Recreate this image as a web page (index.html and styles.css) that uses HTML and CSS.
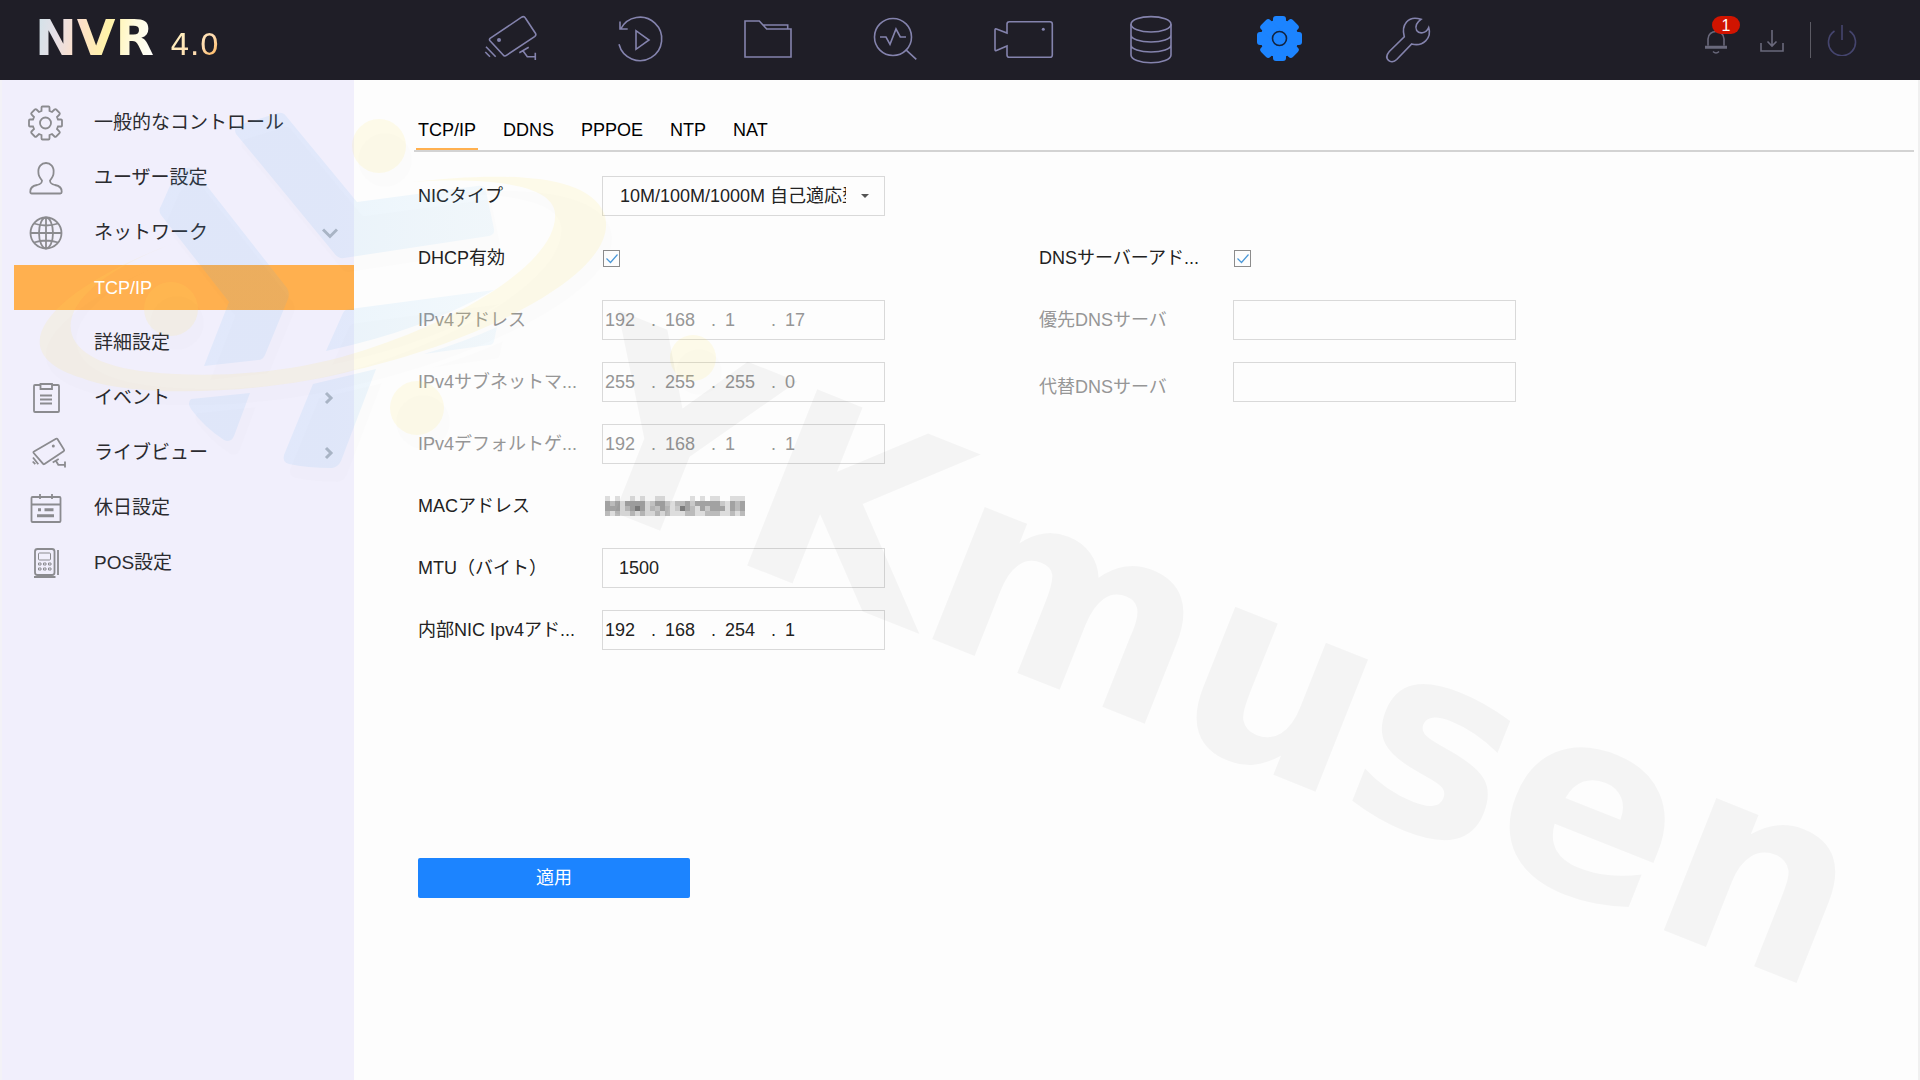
FILE: index.html
```html
<!DOCTYPE html>
<html lang="ja">
<head>
<meta charset="utf-8">
<title>NVR 4.0</title>
<link rel="stylesheet" href="styles.css">
</head>
<body>
<header class="topbar">
  <div class="brand"><span class="brand-name">NVR</span> <span class="brand-version">4.0</span></div>
  <nav class="modules" aria-label="メインメニュー">
    <button class="module" type="button" aria-label="ライブビュー"><svg class="module-icon" viewBox="0 0 64 64"><path d="M11.4 30.2 42.6 9.2Q45 7.8 46.5 10.2L56.4 25.2Q57.6 27.2 55.6 28.6L27.4 47.4Q25.6 48.8 24.2 47L11 32.8Q9.8 31.4 11.4 30.2ZM7 38.7l9.7 10M6.3 44l4.7 4.7M40.3 44.7l9.4-5.4M44.3 43.3l4 5.4h8M56.3 44.7V52"/><circle class="dot" cx="20" cy="32" r="2"/></svg></button>
    <button class="module" type="button" aria-label="再生"><svg class="module-icon" viewBox="0 0 64 64"><path d="M13.7 21A21.7 21.7 0 1 1 12 36.3M13 13.5V21h7.7M29 22.7v18.6L42 32Z"/></svg></button>
    <button class="module" type="button" aria-label="ファイル管理"><svg class="module-icon" viewBox="0 0 64 64"><path d="M10 13h14.3l7.4 8H56v28H10ZM28.3 17h24.4v4"/></svg></button>
    <button class="module" type="button" aria-label="スマート分析"><svg class="module-icon" viewBox="0 0 64 64"><circle cx="30" cy="29" r="18.5"/><path d="M42.7 41.7l10.6 9.6M17 29h6l4 7.3L33 21l4.3 8H43"/></svg></button>
    <button class="module" type="button" aria-label="カメラ管理"><svg class="module-icon" viewBox="0 0 64 64"><path d="M16 16q0-2.300 2.300-2.300h40.700q2.300 0 2.300 2.300v31q0 2.300-2.300 2.300H18.300q-2.300 0-2.300-2.300v-9L5.500 42.500Q4 43 4 41.500V22q0-1.500 1.500-1L16 25Z"/><circle class="dot" cx="52.300" cy="21.300" r="1.500"/></svg></button>
    <button class="module" type="button" aria-label="ストレージ"><svg class="module-icon" viewBox="0 0 64 64"><ellipse cx="32" cy="16.300" rx="20" ry="7.700"/><path d="M12 16.300V47c0 4.300 9 7.700 20 7.700s20-3.400 20-7.700V16.300M12 27c0 4 9 7 20 7s20-3 20-7M12 37c0 4 9 7 20 7s20-3 20-7"/></svg></button>
    <button class="module module--active" type="button" aria-label="設定" aria-current="page"><svg class="module-icon" viewBox="0 0 64 64"><g class="gear-body"><circle cx="32.500" cy="30.500" r="19"/><rect id="tooth" x="26" y="8" width="13" height="45" rx="3"/><use href="#tooth" transform="rotate(45 32.500 30.500)"/><use href="#tooth" transform="rotate(90 32.500 30.500)"/><use href="#tooth" transform="rotate(135 32.500 30.500)"/></g><circle class="gear-ring" cx="32.500" cy="30.500" r="7"/></svg></button>
    <button class="module" type="button" aria-label="メンテナンス"><svg class="module-icon" viewBox="0 0 64 64"><path d="M46 11.300C33 7 26 17 29.300 28.700L14.300 43.500C8 51 16 57 21.700 51.500L36.700 36C48 39 57 30 53.700 19.500C51 26 44 26 41.700 22.500C39.500 18.500 42 14 46 11.300Z"/></svg></button>
  </nav>
  <div class="status">
    <button class="status-button" type="button" aria-label="通知"><svg class="status-icon" viewBox="0 0 32 32"><path d="M8 21.500V15c0-10 16-10 16 0v6.500M5 22.500h22M5 24h22M13 27.500q3 3 6 0"/></svg><span class="badge">1</span></button>
    <button class="status-button status-button--download" type="button" aria-label="ダウンロード"><svg class="status-icon" viewBox="0 0 32 32"><path d="M5 19v8h22v-8M16 6v15M11.500 17.500 16 22l4.500-4.500"/></svg></button>
    <button class="status-button status-button--power" type="button" aria-label="電源"><svg class="status-icon" viewBox="0 0 32 32"><path d="M16 1v15M8.500 7A13.500 13.500 0 1 0 23.500 7"/></svg></button>
  </div>
</header>
<div class="workspace">
  <nav class="sidebar" aria-label="設定メニュー">
    <a class="side-item" href="#general"><svg class="side-icon" viewBox="0 0 40 40"><path d="M15.500 8V4.500q0-1 1-1h6q1 0 1 1V8l2.500 1 2.500-2.500q1-.7 1.700 0l3.300 3.300q.7 1 0 1.700L31 14l1 2.500h3q1 0 1 1v5q0 1-1 1h-3L31 26l2.500 2.500q.7 1 0 1.700l-3.300 3.300q-1 .7-1.700 0L26 31l-2.500 1v3.500q0 1-1 1h-6q-1 0-1-1V32L13 31l-2.500 2.500q-1 .7-1.700 0l-3.300-3.300q-.7-1 0-1.700L8 26l-1-2.500H4q-1 0-1-1v-5q0-1 1-1h3L8 14l-2.500-2.500q-.7-1 0-1.700l3.300-3.300q1-.7 1.700 0L13 9Z"/><circle cx="19.500" cy="20" r="5.500"/></svg><span>一般的なコントロール</span></a>
    <a class="side-item" href="#user"><svg class="side-icon" viewBox="0 0 40 40"><path d="M16 22.500C14 20 12.500 18 12.500 15.500 10.500 1.500 29.500 1.500 27.500 15.500c0 2.500-1.500 4.500-3.500 7 0 2.500 1 3.500 5 4.500 5 1 7 3.500 6.700 7q0 1.500-1.500 1.500H5.800q-1.500 0-1.500-1.500C4 30.500 6 28 11 27c4-1 5-2 5-4.500Z"/></svg><span>ユーザー設定</span></a>
    <a class="side-item" href="#network" aria-expanded="true"><svg class="side-icon" viewBox="0 0 40 40"><circle cx="20" cy="20" r="15.500"/><ellipse cx="20" cy="20" rx="7" ry="15.500"/><path d="M20 4.500v31M4.500 20h31M8 10.500q12 4 24 0M8 29.500q12-4 24 0"/></svg><span>ネットワーク</span><svg class="chevron" viewBox="0 0 16 16"><path d="M1 4.500l7 7 7-7"/></svg></a>
    <a class="side-item side-item--sub side-item--current" href="#tcpip" aria-current="page"><span>TCP/IP</span></a>
    <a class="side-item side-item--sub" href="#advanced"><span>詳細設定</span></a>
    <a class="side-item" href="#event"><svg class="side-icon" viewBox="0 0 40 40"><path d="M14 7H9q-1 0-1 1v25q0 1 1 1h23q1 0 1-1V8q0-1-1-1h-6M14.500 6h11.500v5H14.500ZM14 17.500h12M14 21.500h12M14 25.500h12"/></svg><span>イベント</span><svg class="chevron" viewBox="0 0 16 16"><path d="M4 3l5 5-5 5"/></svg></a>
    <a class="side-item" href="#live"><svg class="side-icon" viewBox="0 0 40 40"><path d="M8 18.500 30 5.800q1-.6 1.600.4L38 16.600q.5 1-.4 1.600L18.500 31q-1 .6-1.600-.4L7.700 20q-.7-1 .3-1.500ZM6.700 28.500l2.600 2.700M7 24.500l5.300 6.700M26.700 29.500l6-3.500M30 28l2.300 3.800h7M39 28.500v6"/><circle class="dot" cx="27.300" cy="13" r="1.500"/></svg><span>ライブビュー</span><svg class="chevron" viewBox="0 0 16 16"><path d="M4 3l5 5-5 5"/></svg></a>
    <a class="side-item" href="#holiday"><svg class="side-icon" viewBox="0 0 40 40"><path d="M6.500 9h27q1 0 1 1v23q0 1-1 1h-27q-1 0-1-1V10q0-1 1-1ZM6 16.500h28M14 6v5M26 6v5"/><path class="thick" d="M12 21.800h3M18.500 21.800h9M11 27.800h17"/></svg><span>休日設定</span></a>
    <a class="side-item" href="#pos"><svg class="side-icon" viewBox="0 0 40 40"><rect x="9" y="6" width="19.500" height="26" rx="2.500"/><path d="M8 34h21.500M32 7v25"/><g class="fine"><rect x="12.500" y="10" width="12" height="7" rx="1"/><path d="M12.500 20h2.500v2h-2.500ZM17.500 20H20v2h-2.500ZM22.500 20H25v2h-2.500ZM12.500 25h2.500v2h-2.500ZM17.500 25H20v2h-2.500ZM22.500 25H25v2h-2.500Z"/></g></svg><span>POS設定</span></a>
  </nav>
  <main class="content">
    <div class="tabs" role="tablist">
      <button class="tab tab--active" type="button" role="tab" aria-selected="true">TCP/IP</button>
      <button class="tab" type="button" role="tab" aria-selected="false">DDNS</button>
      <button class="tab" type="button" role="tab" aria-selected="false">PPPOE</button>
      <button class="tab" type="button" role="tab" aria-selected="false">NTP</button>
      <button class="tab" type="button" role="tab" aria-selected="false">NAT</button>
    </div>
    <form class="settings">
      <div class="columns">
        <div class="column">
          <div class="field">
            <label class="label" for="nic">NICタイプ</label>
            <div class="select-box">
              <select class="box select" id="nic"><option>10M/100M/1000M 自己適応型</option></select>
              <svg class="caret" viewBox="0 0 8 4"><path d="M0 0h8L4 4Z"/></svg>
            </div>
          </div>
          <div class="field">
            <label class="label" for="dhcp">DHCP有効</label>
            <input class="check" id="dhcp" type="checkbox" checked>
          </div>
          <div class="field field--disabled">
            <label class="label" for="ip1">IPv4アドレス</label>
            <div class="box address">
              <input class="octet" id="ip1" value="192" disabled><span class="point">.</span><input class="octet" value="168" aria-label="IPv4アドレス 2" disabled><span class="point">.</span><input class="octet" value="1" aria-label="IPv4アドレス 3" disabled><span class="point">.</span><input class="octet" value="17" aria-label="IPv4アドレス 4" disabled>
            </div>
          </div>
          <div class="field field--disabled">
            <label class="label" for="mask1">IPv4サブネットマ...</label>
            <div class="box address">
              <input class="octet" id="mask1" value="255" disabled><span class="point">.</span><input class="octet" value="255" aria-label="サブネットマスク 2" disabled><span class="point">.</span><input class="octet" value="255" aria-label="サブネットマスク 3" disabled><span class="point">.</span><input class="octet" value="0" aria-label="サブネットマスク 4" disabled>
            </div>
          </div>
          <div class="field field--disabled">
            <label class="label" for="gw1">IPv4デフォルトゲ...</label>
            <div class="box address">
              <input class="octet" id="gw1" value="192" disabled><span class="point">.</span><input class="octet" value="168" aria-label="ゲートウェイ 2" disabled><span class="point">.</span><input class="octet" value="1" aria-label="ゲートウェイ 3" disabled><span class="point">.</span><input class="octet" value="1" aria-label="ゲートウェイ 4" disabled>
            </div>
          </div>
          <div class="field">
            <span class="label">MACアドレス</span>
            <svg class="mac-mask" viewBox="0 0 28 4" shape-rendering="crispEdges" role="img" aria-label="MACアドレス（非表示）">
              <path fill="#c8c8c8" d="M0 1h28v2h-28z"/>
              <path fill="#ddd" d="M0 0h1v1h-1zM2 0h1v1h-1zM5 0h1v1h-1zM7 0h1v1h-1zM10 0h2v1h-2zM17 0h1v1h-1zM19 0h1v1h-1zM21 0h2v1h-2zM25 0h3v1h-3zM3 1h1v2h-1zM8 1h1v2h-1zM13 1h1v2h-1zM18 2h1v1h-1zM24 1h1v2h-1zM0 3h28v1h-28z"/>
              <path fill="#bbb" d="M1 1h1v1h-1zM4 2h1v1h-1zM9 2h1v1h-1zM12 2h1v1h-1zM14 1h2v1h-2zM17 2h1v1h-1zM26 1h1v2h-1zM0 3h1v1h-1zM2 3h1v1h-1zM5 3h1v1h-1zM7 3h1v1h-1zM10 3h1v1h-1zM12 3h1v1h-1zM16 3h2v1h-2zM20 3h3v1h-3zM25 3h1v1h-1zM27 3h1v1h-1z"/>
              <path fill="#a2a2a2" d="M0 1h1v1h-1zM2 1h1v1h-1zM4 1h3v1h-3zM7 1h1v2h-1zM0 2h3v1h-3zM5 2h1v1h-1zM10 1h2v1h-2zM11 2h1v1h-1zM16 1h1v1h-1zM18 1h2v1h-2zM16 2h1v1h-1zM19 2h1v1h-1zM20 1h3v1h-3zM21 2h3v1h-3zM25 1h1v2h-1zM27 1h1v2h-1z"/>
              <path fill="#7c7c7c" d="M6 2h1v1h-1zM15 2h1v1h-1z"/>
            </svg>
          </div>
          <div class="field">
            <label class="label" for="mtu">MTU（バイト）</label>
            <input class="box text-input" id="mtu" value="1500">
          </div>
          <div class="field">
            <label class="label" for="nic1">内部NIC Ipv4アド...</label>
            <div class="box address">
              <input class="octet" id="nic1" value="192"><span class="point">.</span><input class="octet" value="168" aria-label="内部NIC 2"><span class="point">.</span><input class="octet" value="254" aria-label="内部NIC 3"><span class="point">.</span><input class="octet" value="1" aria-label="内部NIC 4">
            </div>
          </div>
        </div>
        <div class="column column--dns">
          <div class="field">
            <label class="label" for="dns">DNSサーバーアド...</label>
            <input class="check" id="dns" type="checkbox" checked>
          </div>
          <div class="field field--disabled">
            <label class="label" for="dns1">優先DNSサーバ</label>
            <input class="box text-input" id="dns1" disabled>
          </div>
          <div class="field field--disabled field--low">
            <label class="label" for="dns2">代替DNSサーバ</label>
            <input class="box text-input" id="dns2" disabled>
          </div>
        </div>
      </div>
      <button class="apply" type="button">適用</button>
    </form>
  </main>
</div>
<svg class="watermark" viewBox="0 0 1920 1080" preserveAspectRatio="xMinYMin meet" aria-hidden="true">
  <defs>
    <linearGradient id="sky" gradientUnits="userSpaceOnUse" x1="160" y1="0" x2="500" y2="0">
      <stop offset="0" stop-color="#50aaf0" stop-opacity=".1"/>
      <stop offset=".5" stop-color="#50aaf0" stop-opacity=".1"/>
      <stop offset="1" stop-color="#50b4f0" stop-opacity=".06"/>
    </linearGradient>
    <g id="blades">
      <path d="M236 134q-3-6 3-9l39-12q5-1 8 3l71 86 120-16q8-1 9 5l8 38q1 6-5 7l-145 22q-6 1-10-5Z"/>
      <path d="M161 215q-3-5 0-9l12-27q3-6 8-8l6-3q5-1 9 4l91 116q3 5 1 11l-23 56q-2 5-7 5l-54 6 25-64Z"/>
      <path d="M191 399l59-6-16 43q-3 7-10 4-20-13-33-31-4-6 0-10Z"/>
      <path d="M313 384l63-15-35 92q-3 6-9 7-25 0-43-4-7-2-5-9Z"/>
      <path d="M326 351l17-38q2-4 7-4l144-19q-70 40-168 61Z"/>
      <path d="M424 354q40-12 73-27l-3 14q-1 4-5 4Z"/>
    </g>
    <g id="orbit">
      <path d="M177 242C60 285-10 350 82 378c55 22 190 15 273-8 130-30 270-100 249-157-18-42-110-40-192-31 80-5 140 3 143 31 4 50-100 110-200 140-70 22-150 25-205 19-110-10-110-80 27-130Z"/>
      <circle cx="379" cy="146" r="27"/><circle cx="171" cy="309" r="27"/><circle cx="417" cy="408" r="27"/><circle cx="693" cy="358" r="23"/>
    </g>
  </defs>
  <g class="mark-shade" transform="translate(6 14)"><use href="#blades"/><use href="#orbit"/></g>
  <use class="mark-blades" href="#blades"/>
  <use class="mark-orbit" href="#orbit"/>
  <text class="mark-text" transform="translate(550 487) rotate(21.700)" x="0" y="0">YKmusen</text>
</svg>
</body>
</html>
```
FILE: styles.css
```css
* { box-sizing: border-box; }

body {
  margin: 0;
  min-height: 100vh;
  display: flex;
  flex-direction: column;
  position: relative;
  background: #fdfdfd;
  color: #222;
  font: 18px/22px "Liberation Sans", "Noto Sans CJK JP", sans-serif;
}

button, input, select { font: inherit; color: inherit; }
button { padding: 0; border: 0; background: none; cursor: pointer; }

/* Top bar */
.topbar {
  display: flex;
  height: 80px;
  padding-right: 60px;
  background: #1f1e27;
}
.brand {
  display: flex;
  align-items: baseline;
  gap: 16px;
  width: 447px;
  padding: 8px 0 0 35px;
  color: #ffe9b0;
}
.brand-name {
  font: bold 50px/60px "DejaVu Sans", sans-serif;
  background: linear-gradient(100deg, #cfe3ea 0%, #e6dfe6 20%, #fde0c8 38%, #fff3a8 60%, #fffbe0 80%, #fff 100%);
  -webkit-background-clip: text;
  background-clip: text;
  color: transparent;
}
.brand-version {
  font: 31px/60px "DejaVu Sans", sans-serif;
  background: linear-gradient(135deg, #fff2c0 20%, #ffdcb0 60%, #ffb04c 85%);
  -webkit-background-clip: text;
  background-clip: text;
  color: transparent;
}
.modules { display: flex; }
.module {
  width: 128px;
  display: flex;
  align-items: center;
  justify-content: center;
}
.module-icon {
  width: 64px;
  height: 64px;
  fill: none;
  stroke: #8483ad;
  stroke-width: 1.6;
}
.module-icon .dot { fill: #8483ad; stroke: none; }
.gear-body { fill: #1c84ff; stroke: none; }
.module-icon .gear-ring { stroke: #12233f; }

.status {
  display: flex;
  align-items: center;
  margin-left: auto;
}
.status-button {
  position: relative;
  width: 32px;
  height: 36px;
}
.status-icon {
  display: block;
  width: 32px;
  height: 32px;
  fill: none;
  stroke: #6a697c;
  stroke-width: 1.6;
}
.status-button--download { margin: 0 22px 0 24px; }
.status-button--power {
  width: 50px;
  border-left: 1px solid #5c5b64;
  padding-left: 15px;
}
.status-button--power .status-icon { stroke: #45456e; }
.badge {
  position: absolute;
  left: 12px;
  top: -6px;
  width: 28px;
  height: 18px;
  border-radius: 9px;
  background: #d01400;
  color: #fff;
  font-size: 16px;
  line-height: 20px;
}

/* Page body */
.workspace { flex: 1; display: flex; }
.sidebar {
  flex: none;
  width: 354px;
  padding-top: 15px;
  border-left: 2px solid #f3f2f7;
  background: #f1effc;
}
.side-item {
  display: flex;
  align-items: center;
  height: 55px;
  padding: 0 16px 0 24px;
  color: #2b2b2f;
  font-size: 19px;
  text-decoration: none;
}
.side-icon {
  width: 40px;
  height: 40px;
  margin-right: 28px;
  fill: none;
  stroke: #8b8b8f;
  stroke-width: 1.8;
}
.side-icon .dot { fill: #8b8b8f; stroke: none; }
.side-icon .thick { stroke-width: 3; }
.side-icon .fine { stroke-width: 1; }
.chevron {
  width: 16px;
  height: 16px;
  margin-left: auto;
  fill: none;
  stroke: #b4b7c2;
  stroke-width: 3;
}
.side-item--sub { padding-left: 92px; }
.side-item--current {
  height: 45px;
  margin: 5px 0 5px 12px;
  padding-left: 80px;
  background: #ffb04f;
  color: #fff;
  font-size: 18px;
}

.content {
  flex: 1;
  padding: 0 4px 0 60px;
  border-right: 2px solid #f0f0f0;
}
.tabs {
  display: flex;
  gap: 23px;
  padding-left: 2px;
  border-bottom: 2px solid #d3d3d3;
}
.tab {
  padding: 39px 2px 7px;
  border-bottom: 2px solid transparent;
  color: #000;
}
.tab--active { border-bottom-color: #ffb04f; }

/* Form */
.settings { padding: 24px 0 40px 4px; }
.columns { display: flex; gap: 154px; }
.column {
  display: flex;
  flex-direction: column;
  gap: 22px;
}
.column--dns { padding-top: 62px; }
.field {
  display: grid;
  grid-template-columns: 184px 283px;
  align-items: center;
  min-height: 40px;
}
.column--dns .field { grid-template-columns: 194px 283px; }
.field--disabled { color: #969696; }
.field--low { align-items: end; }
.field--low .label { line-height: 30px; }
.label { white-space: nowrap; }
.box {
  width: 100%;
  height: 40px;
  border: 1px solid #d9d9d9;
  background: transparent;
}
.text-input { padding: 0 16px; }
.select-box { position: relative; }
.select {
  display: block;
  appearance: none;
  padding: 0 38px 0 17px;
}
.caret {
  position: absolute;
  right: 16px;
  top: 18px;
  width: 8px;
  height: 4px;
  fill: #555;
  pointer-events: none;
}
.check {
  appearance: none;
  width: 17px;
  height: 17px;
  margin: 0 1px;
  border: 1px solid #8c8c8c;
  background: url("data:image/svg+xml,%3Csvg xmlns='http://www.w3.org/2000/svg' viewBox='0 0 15 15'%3E%3Cpath d='M2.500 7.500l4 4 7-8' fill='none' stroke='%234a98d8' stroke-width='1.200'/%3E%3C/svg%3E") center / 15px 15px no-repeat;
}
.address {
  display: flex;
  align-items: center;
  padding-left: 2px;
}
.octet {
  width: 46px;
  padding: 0;
  border: 0;
  background: transparent;
}
.point { width: 14px; }
.mac-mask {
  width: 140px;
  height: 20px;
  margin-left: 3px;
}
.apply {
  width: 272px;
  height: 40px;
  margin-top: 208px;
  border-radius: 2px;
  background: #1c84ff;
  color: #fff;
}

/* Brand overlay */
.watermark {
  position: absolute;
  inset: 0;
  width: 100%;
  height: 100%;
  pointer-events: none;
}
.mark-shade { fill: #000; fill-opacity: .008; }
.mark-blades { fill: url(#sky); }
.mark-orbit { fill: #ffe65a; fill-opacity: .12; }
.mark-text {
  fill: #000;
  fill-opacity: .034;
  font: bold 260px "DejaVu Sans", sans-serif;
}
```
